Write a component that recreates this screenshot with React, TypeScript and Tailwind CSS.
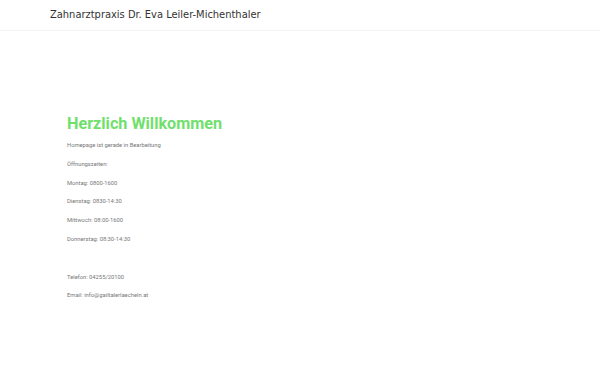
export default function App() {
  const lines = [
    "Homepage ist gerade in Bearbeitung",
    "Öffnungszeiten:",
    "Montag: 0800-1600",
    "Dienstag: 0830-14:30",
    "Mittwoch: 08:00-1600",
    "Donnerstag: 08:30-14:30",
    "",
    "Telefon: 04255/20100",
    "Email: info@gailtalerlaecheln.at",
  ];
  return (
    <div className="min-h-[375px] bg-white">
      <header className="h-[31px] border-b border-[#f3f3f3] flex items-center pl-[50px]">
        <span className="text-[11px] text-[#333] font-['DejaVu_Sans_Condensed','DejaVu_Sans',sans-serif] pt-[1px]">
          Zahnarztpraxis Dr. Eva Leiler-Michenthaler
        </span>
      </header>
      <main className="pl-[67px] pt-[82px] font-['Roboto',sans-serif]">
        <h1 className="text-[16.2px] leading-[22px] font-bold text-[#70df6c]">Herzlich Willkommen</h1>
        <div className="mt-[4px] flex flex-col">
          {lines.map((l, i) => (
            <p key={i} className="h-[18.8px] text-[5.8px] leading-[12px] text-[#777]">
              {l}
            </p>
          ))}
        </div>
      </main>
    </div>
  );
}
